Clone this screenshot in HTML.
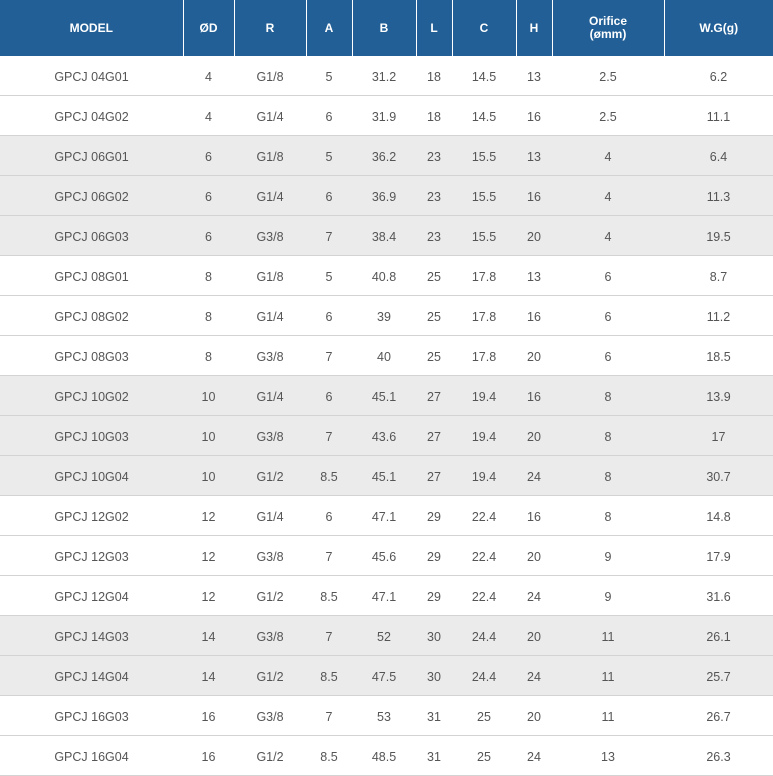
<!DOCTYPE html>
<html><head><meta charset="utf-8"><style>
body{margin:0;width:773px;height:774px;overflow:hidden;background:#fff;font-family:"Liberation Sans",sans-serif}
table{border-collapse:collapse;table-layout:fixed;width:773px}
th{background:#225f96;color:#fff;font-size:12px;font-weight:bold;height:56px;padding:0;border-left:1px solid #fff;line-height:13px}
th:first-child{border-left:none}
td{height:37px;padding:2px 0 0 0;text-align:center;font-size:12.5px;color:#555;border-bottom:1px solid #d3d3d3}
tr.g td{background:#ebebeb}
</style></head><body>
<table>
<colgroup><col style="width:183px"><col style="width:51px"><col style="width:72px"><col style="width:46px"><col style="width:64px"><col style="width:36px"><col style="width:64px"><col style="width:36px"><col style="width:112px"><col style="width:109px"></colgroup>
<tr><th>MODEL</th><th>ØD</th><th>R</th><th>A</th><th>B</th><th>L</th><th>C</th><th>H</th><th>Orifice<br>(ømm)</th><th>W.G(g)</th></tr>
<tr><td>GPCJ 04G01</td><td>4</td><td>G1/8</td><td>5</td><td>31.2</td><td>18</td><td>14.5</td><td>13</td><td>2.5</td><td>6.2</td></tr>
<tr><td>GPCJ 04G02</td><td>4</td><td>G1/4</td><td>6</td><td>31.9</td><td>18</td><td>14.5</td><td>16</td><td>2.5</td><td>11.1</td></tr>
<tr class="g"><td>GPCJ 06G01</td><td>6</td><td>G1/8</td><td>5</td><td>36.2</td><td>23</td><td>15.5</td><td>13</td><td>4</td><td>6.4</td></tr>
<tr class="g"><td>GPCJ 06G02</td><td>6</td><td>G1/4</td><td>6</td><td>36.9</td><td>23</td><td>15.5</td><td>16</td><td>4</td><td>11.3</td></tr>
<tr class="g"><td>GPCJ 06G03</td><td>6</td><td>G3/8</td><td>7</td><td>38.4</td><td>23</td><td>15.5</td><td>20</td><td>4</td><td>19.5</td></tr>
<tr><td>GPCJ 08G01</td><td>8</td><td>G1/8</td><td>5</td><td>40.8</td><td>25</td><td>17.8</td><td>13</td><td>6</td><td>8.7</td></tr>
<tr><td>GPCJ 08G02</td><td>8</td><td>G1/4</td><td>6</td><td>39</td><td>25</td><td>17.8</td><td>16</td><td>6</td><td>11.2</td></tr>
<tr><td>GPCJ 08G03</td><td>8</td><td>G3/8</td><td>7</td><td>40</td><td>25</td><td>17.8</td><td>20</td><td>6</td><td>18.5</td></tr>
<tr class="g"><td>GPCJ 10G02</td><td>10</td><td>G1/4</td><td>6</td><td>45.1</td><td>27</td><td>19.4</td><td>16</td><td>8</td><td>13.9</td></tr>
<tr class="g"><td>GPCJ 10G03</td><td>10</td><td>G3/8</td><td>7</td><td>43.6</td><td>27</td><td>19.4</td><td>20</td><td>8</td><td>17</td></tr>
<tr class="g"><td>GPCJ 10G04</td><td>10</td><td>G1/2</td><td>8.5</td><td>45.1</td><td>27</td><td>19.4</td><td>24</td><td>8</td><td>30.7</td></tr>
<tr><td>GPCJ 12G02</td><td>12</td><td>G1/4</td><td>6</td><td>47.1</td><td>29</td><td>22.4</td><td>16</td><td>8</td><td>14.8</td></tr>
<tr><td>GPCJ 12G03</td><td>12</td><td>G3/8</td><td>7</td><td>45.6</td><td>29</td><td>22.4</td><td>20</td><td>9</td><td>17.9</td></tr>
<tr><td>GPCJ 12G04</td><td>12</td><td>G1/2</td><td>8.5</td><td>47.1</td><td>29</td><td>22.4</td><td>24</td><td>9</td><td>31.6</td></tr>
<tr class="g"><td>GPCJ 14G03</td><td>14</td><td>G3/8</td><td>7</td><td>52</td><td>30</td><td>24.4</td><td>20</td><td>11</td><td>26.1</td></tr>
<tr class="g"><td>GPCJ 14G04</td><td>14</td><td>G1/2</td><td>8.5</td><td>47.5</td><td>30</td><td>24.4</td><td>24</td><td>11</td><td>25.7</td></tr>
<tr><td>GPCJ 16G03</td><td>16</td><td>G3/8</td><td>7</td><td>53</td><td>31</td><td>25</td><td>20</td><td>11</td><td>26.7</td></tr>
<tr><td>GPCJ 16G04</td><td>16</td><td>G1/2</td><td>8.5</td><td>48.5</td><td>31</td><td>25</td><td>24</td><td>13</td><td>26.3</td></tr>
</table>
</body></html>
